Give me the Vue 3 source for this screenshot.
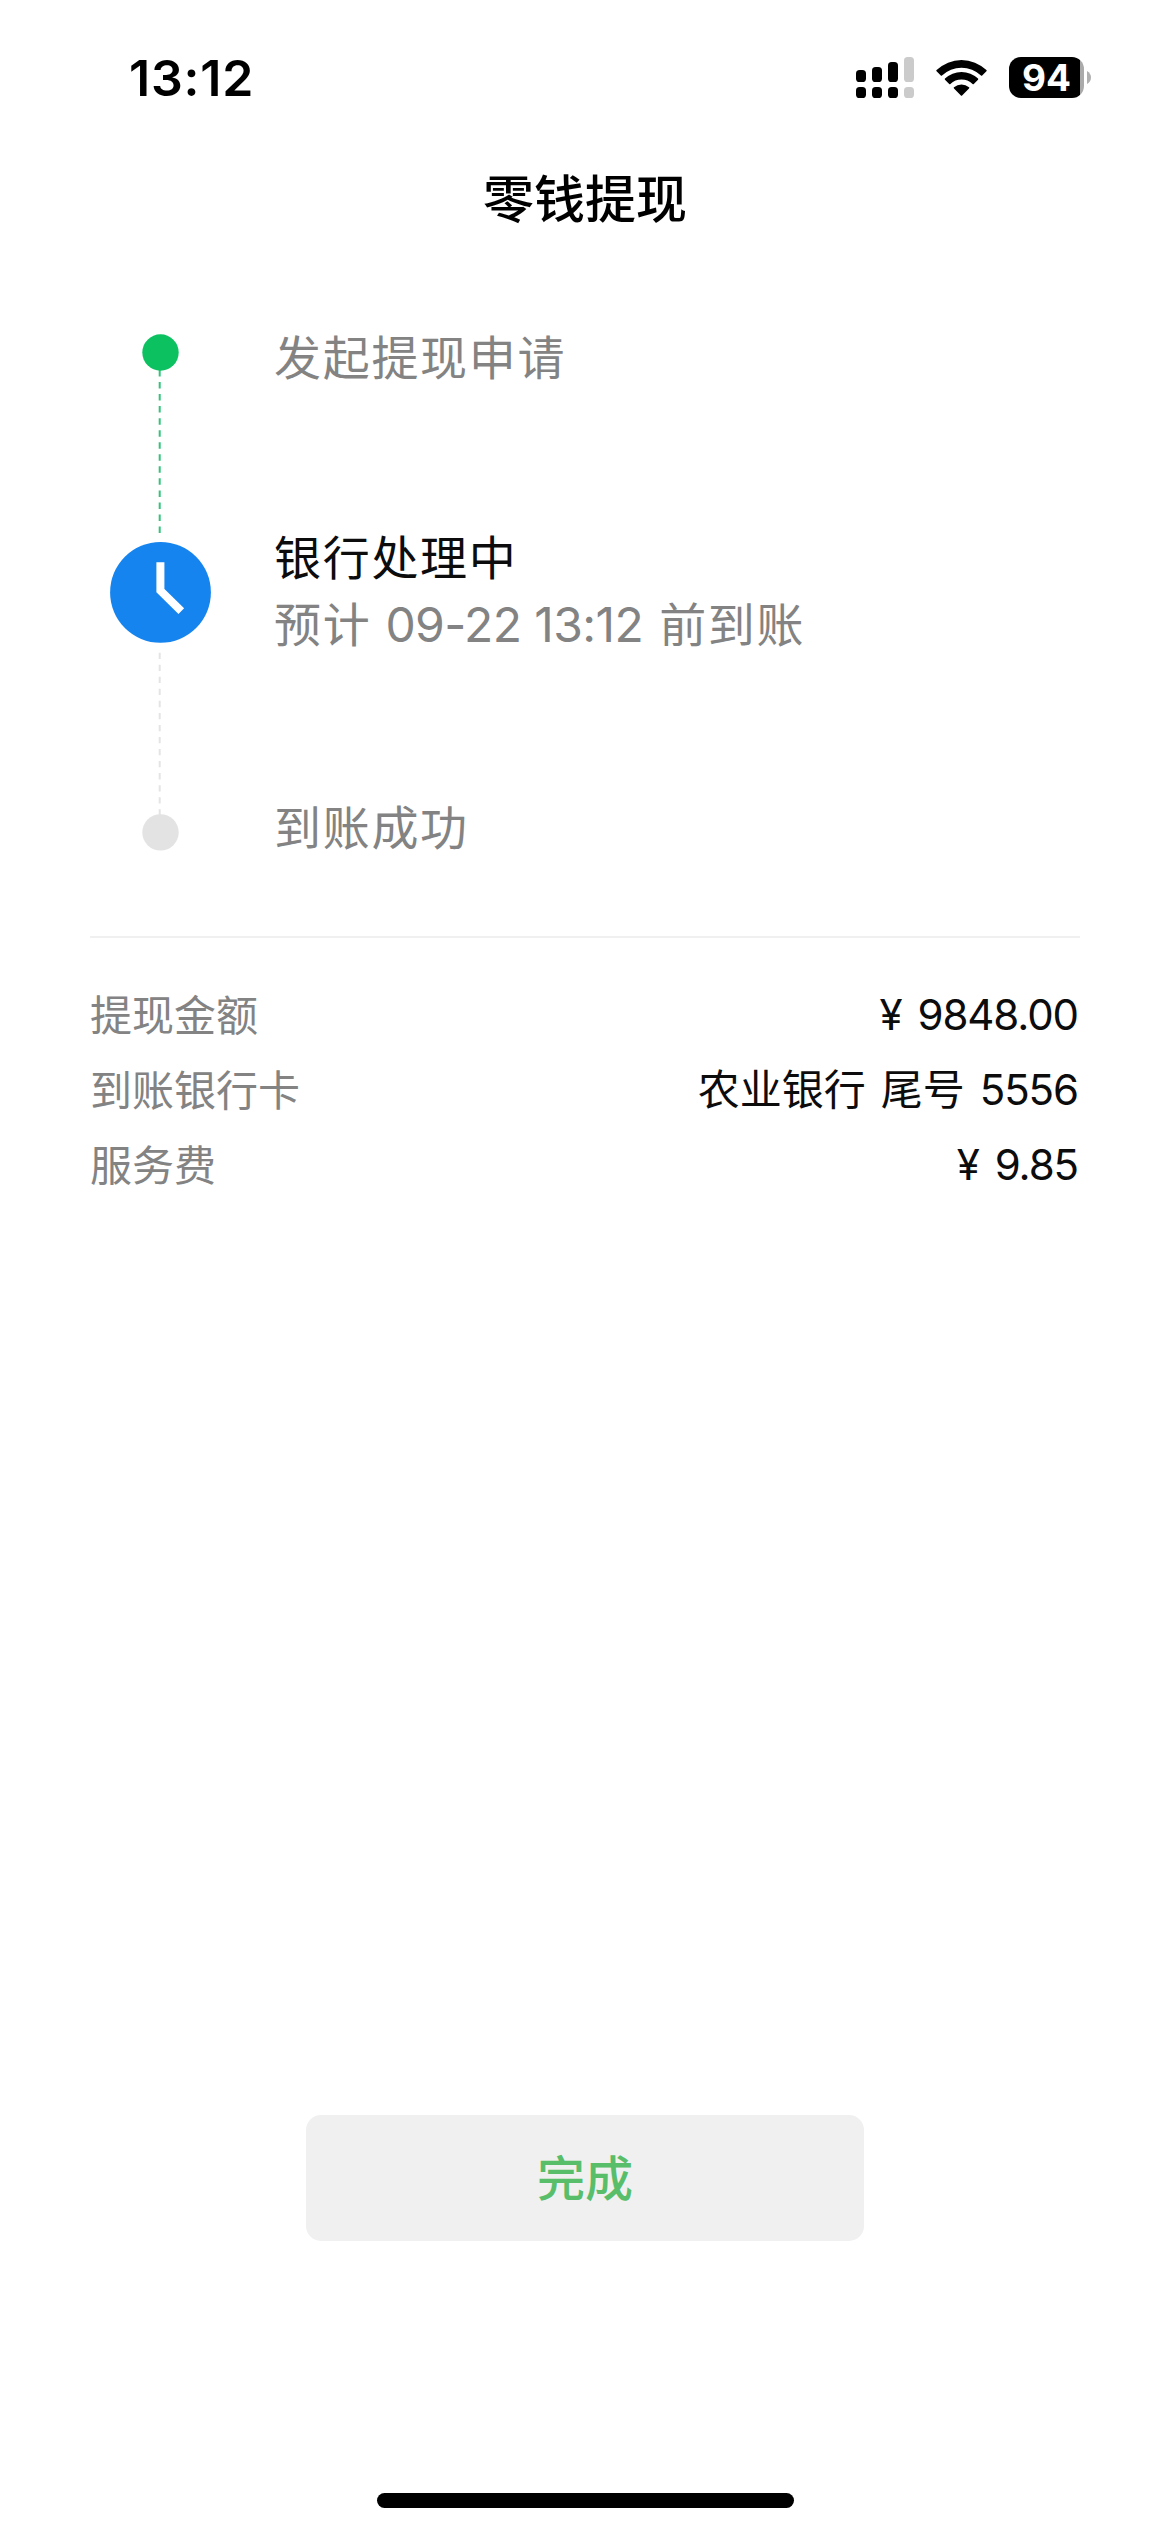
<script setup>
const signal = [
  { x: 0, y: 13, h: 12, on: true },
  { x: 16, y: 10, h: 15, on: true },
  { x: 32, y: 5, h: 20, on: true },
  { x: 48, y: 0, h: 25, on: false },
]
</script>

<template>
  <main class="screen">
    <header class="status">
      <span class="time">13:12</span>
      <div class="indicators">
        <svg class="signal" width="58" height="41" viewBox="0 0 58 41">
          <g v-for="b in signal" :key="b.x" :fill="b.on ? '#000' : '#cbcbcb'">
            <rect :x="b.x" :y="b.y" width="10" :height="b.h" rx="3.6" />
            <rect :x="b.x" y="30" width="10" height="11" rx="3.6" />
          </g>
        </svg>
        <svg class="wifi" width="51" height="37" viewBox="0 0 51 37">
          <path d="M0.6 11.1a35.8 35.8 0 0 1 49.8 0q.6.6 0 1.2l-4.2 4.2q-.6.5-1.2 0a28.2 28.2 0 0 0-39 0q-.6.5-1.2 0l-4.2-4.2q-.6-.6 0-1.2Z" />
          <path d="M9 19.5a24 24 0 0 1 33 0q.6.6 0 1.2l-4.2 4.2q-.6.5-1.2 0a16.3 16.3 0 0 0-22.2 0q-.6.5-1.2 0L9 20.7q-.6-.6 0-1.2Z" />
          <path d="M18 28.2a12 12 0 0 1 15 0q.7.6 0 1.3l-6.9 6.9q-.6.6-1.2 0L18 29.5q-.7-.7 0-1.3Z" />
        </svg>
        <div class="battery"><span>94</span></div>
        <svg class="nub" width="4" height="13" viewBox="0 0 4 13"><path d="M0 0Q4 2.5 4 6.5T0 13Z" fill="#b0b0b0" /></svg>
      </div>
    </header>

    <h1 class="title">零钱提现</h1>

    <section class="progress">
      <svg class="track" width="106" height="518" viewBox="0 0 106 518">
        <path d="M51.7 36V200" stroke="#33c47c" stroke-width="2" stroke-dasharray="6.5 5.54" />
        <path d="M51.7 318.7V482" stroke="#e4e4e4" stroke-width="2" stroke-dasharray="6.3 5.74" />
        <circle cx="52.5" cy="18.5" r="18.2" fill="#0bc160" />
        <circle cx="52.5" cy="258.4" r="50.4" fill="#1684ee" />
        <path d="M52.4 228.3V256.5L73.3 277.2" fill="none" stroke="#fff" stroke-width="8" />
        <circle cx="52.5" cy="498.4" r="18.2" fill="#e3e3e3" />
      </svg>
      <div class="steps">
        <p class="step first">发起提现申请</p>
        <p class="step current">银行处理中</p>
        <p class="step note">预计<span class="num">09-22 13:12</span>前到账</p>
        <p class="step last">到账成功</p>
      </div>
    </section>

    <dl class="details">
      <div class="row"><dt>提现金额</dt><dd>¥<span class="gap"></span>9848.00</dd></div>
      <div class="row"><dt>到账银行卡</dt><dd><span class="cn">农业银行</span><span class="cn">尾号</span>5556</dd></div>
      <div class="row"><dt>服务费</dt><dd>¥<span class="gap"></span>9.85</dd></div>
    </dl>

    <button class="done" type="button">完成</button>
    <div class="home"></div>
  </main>
</template>

<style>
body { background: #fff; }
</style>

<style scoped>
.screen {
  box-sizing: border-box;
  width: 1170px;
  height: 2532px;
  display: flex;
  flex-direction: column;
  background: #fff;
  color: #0c0c0c;
  font-family: Inter, "Noto Sans CJK SC", sans-serif;
  overflow: hidden;
}
.status {
  display: flex;
  justify-content: space-between;
  height: 156px;
  padding: 0 79px 0 129px;
  color: #000;
}
.time {
  margin-top: 48px;
  font-size: 50px;
  line-height: 60px;
  font-weight: 600;
  letter-spacing: 0.8px;
}
.indicators { display: flex; align-items: flex-start; padding-top: 57px; }
.signal { margin-right: 22px; }
.wifi { margin: 2px 22px 0 0; }
.battery {
  width: 75px;
  height: 41px;
  border-radius: 12px;
  background: linear-gradient(to right, #000 71px, #aaa 71px);
  color: #fff;
  font-size: 37px;
  line-height: 41px;
  font-weight: 700;
  text-align: center;
}
.nub { margin: 14px 0 0 3px; }
.title {
  margin: 0;
  height: 84px;
  text-align: center;
  color: #000;
  font-size: 51px;
  line-height: 87px;
  font-weight: 500;
}
.progress { display: flex; height: 602px; padding: 94px 0 0 108px; }
.steps { margin-left: 60px; }
.step {
  margin: 0;
  height: 66px;
  line-height: 66px;
  font-size: 47px;
  letter-spacing: 1.7px;
  color: #838383;
  white-space: nowrap;
}
.first { margin-top: -9px; }
.current { margin-top: 134px; color: #0c0c0c; }
.note { margin-top: 1px; }
.last { margin-top: 137px; }
.num { margin: 0 16px 0 14px; font-size: 48px; letter-spacing: -0.6px; }
.details {
  margin: 0 90px;
  padding-top: 38px;
  border-top: 2px solid #f0f0f0;
}
.row { display: flex; justify-content: space-between; height: 75px; line-height: 75px; }
dt { padding-top: 2px; color: #838383; font-size: 42px; }
dd { margin: 0; padding: 1px 2px 0 0; font-size: 42px; letter-spacing: -1.1px; }
.gap { display: inline-block; width: 16px; }
.cn { margin-right: 15px; letter-spacing: 0; }
.done {
  align-self: center;
  width: 558px;
  height: 126px;
  margin-top: 914px;
  padding: 0 0 6px;
  border: 0;
  border-radius: 15px;
  background: #f0f0f0;
  color: #58be6a;
  font: 500 48px/120px "Noto Sans CJK SC", sans-serif;
}
.home { width: 417px; height: 15px; margin: 252px 0 0 377px; border-radius: 8px; background: #000; }
</style>
